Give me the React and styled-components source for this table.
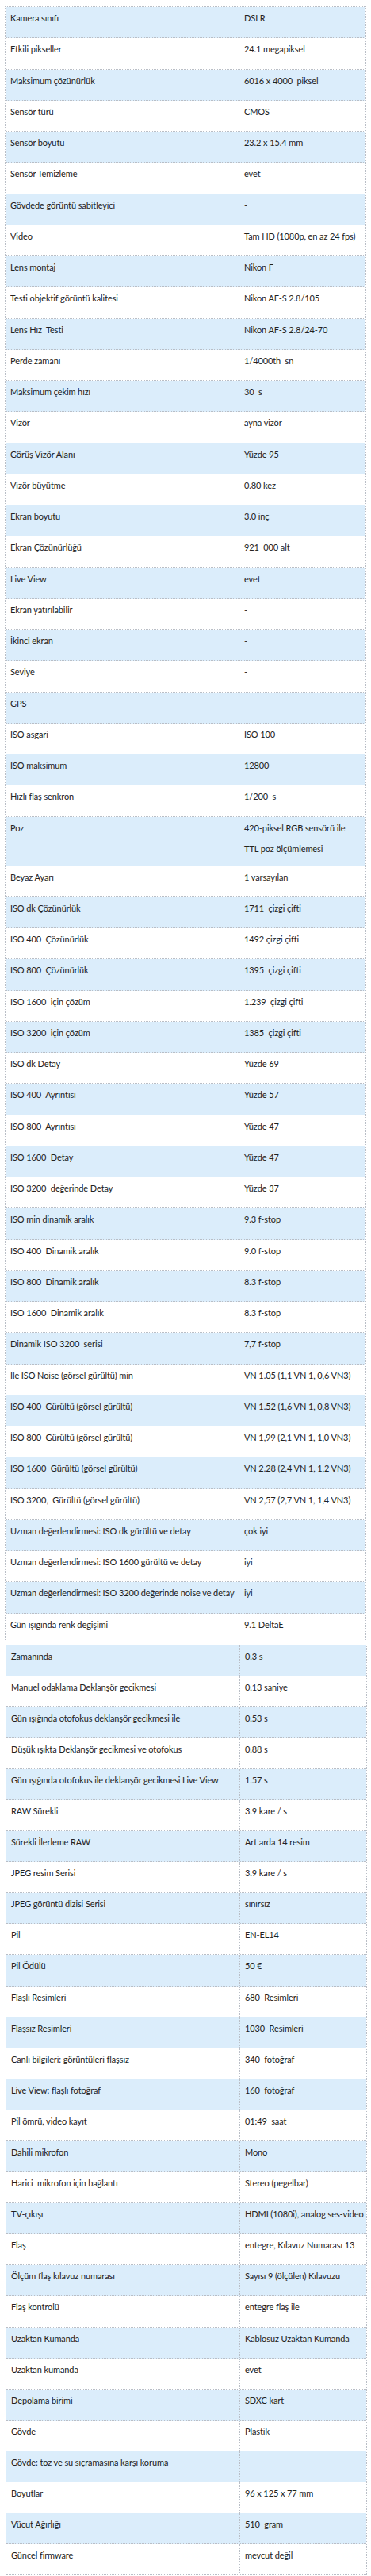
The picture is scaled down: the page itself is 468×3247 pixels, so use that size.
import React from "react";
import styled, { createGlobalStyle } from "styled-components";

const Global = createGlobalStyle`
  html, body { margin: 0; padding: 0; background: #ffffff; }
  body { font-family: Lato, "Noto Sans", "Liberation Sans", sans-serif; color: #222; }
`;

const Page = styled.div`
  padding: 8px 0 0 6px;
  display: flex;
  flex-direction: column;
  gap: 6px;
`;

const Table = styled.div`
  width: 456px;
  margin-left: ${(p) => p.$shift || 0}px;
  border-top: 1px dotted #b9bec6;
  border-left: 1px dotted #b9bec6;
  border-right: 1px dotted #b9bec6;
  box-sizing: border-box;
  display: flex;
  flex-direction: column;
`;

const Row = styled.div`
  display: grid;
  grid-template-columns: 295px 1fr;
  height: ${(p) => p.$h}px;
  box-sizing: border-box;
  background: ${(p) => (p.$blue ? "#dbedfb" : "#ffffff")};
  border-bottom: ${(p) => (p.$noLine ? "none" : "1px dotted #b9bec6")};
`;

const Cell = styled.div`
  padding: 1px 2px 0 6px;
  font-size: 11px;
  line-height: 26px;
  letter-spacing: -0.1px;
  white-space: pre;
  overflow: hidden;
  border-right: ${(p) => (p.$first ? "1px dotted #b9bec6" : "none")};
`;

const table1 = [
  ["Kamera sınıfı", "DSLR"],
  ["Etkili pikseller", "24.1 megapiksel"],
  ["Maksimum çözünürlük", "6016 x 4000  piksel"],
  ["Sensör türü", "CMOS"],
  ["Sensör boyutu", "23.2 x 15.4 mm"],
  ["Sensör Temizleme", "evet"],
  ["Gövdede görüntü sabitleyici", "-"],
  ["Video", "Tam HD (1080p, en az 24 fps)"],
  ["Lens montaj", "Nikon F"],
  ["Testi objektif görüntü kalitesi", "Nikon AF-S 2.8/105"],
  ["Lens Hız  Testi", "Nikon AF-S 2.8/24-70"],
  ["Perde zamanı", "1/4000th  sn"],
  ["Maksimum çekim hızı", "30  s"],
  ["Vizör", "ayna vizör"],
  ["Görüş Vizör Alanı", "Yüzde 95"],
  ["Vizör büyütme", "0.80 kez"],
  ["Ekran boyutu", "3.0 inç"],
  ["Ekran Çözünürlüğü", "921  000 alt"],
  ["Live View", "evet"],
  ["Ekran yatırılabilir", "-"],
  ["İkinci ekran", "-"],
  ["Seviye", "-"],
  ["GPS", "-"],
  ["ISO asgari", "ISO 100"],
  ["ISO maksimum", "12800"],
  ["Hızlı flaş senkron", "1/200  s"],
  ["Poz", "420-piksel RGB sensörü ile\nTTL poz ölçümlemesi", true],
  ["Beyaz Ayarı", "1 varsayılan"],
  ["ISO dk Çözünürlük", "1711  çizgi çifti"],
  ["ISO 400  Çözünürlük", "1492 çizgi çifti"],
  ["ISO 800  Çözünürlük", "1395  çizgi çifti"],
  ["ISO 1600  için çözüm", "1.239  çizgi çifti"],
  ["ISO 3200  için çözüm", "1385  çizgi çifti"],
  ["ISO dk Detay", "Yüzde 69"],
  ["ISO 400  Ayrıntısı", "Yüzde 57"],
  ["ISO 800  Ayrıntısı", "Yüzde 47"],
  ["ISO 1600  Detay", "Yüzde 47"],
  ["ISO 3200  değerinde Detay", "Yüzde 37"],
  ["ISO min dinamik aralık", "9.3 f-stop"],
  ["ISO 400  Dinamik aralık", "9.0 f-stop"],
  ["ISO 800  Dinamik aralık", "8.3 f-stop"],
  ["ISO 1600  Dinamik aralık", "8.3 f-stop"],
  ["Dinamik ISO 3200  serisi", "7,7 f-stop"],
  ["Ile ISO Noise (görsel gürültü) min", "VN 1.05 (1,1 VN 1, 0,6 VN3)"],
  ["ISO 400  Gürültü (görsel gürültü)", "VN 1.52 (1,6 VN 1, 0,8 VN3)"],
  ["ISO 800  Gürültü (görsel gürültü)", "VN 1,99 (2,1 VN 1, 1,0 VN3)"],
  ["ISO 1600  Gürültü (görsel gürültü)", "VN 2.28 (2,4 VN 1, 1,2 VN3)"],
  ["ISO 3200,  Gürültü (görsel gürültü)", "VN 2,57 (2,7 VN 1, 1,4 VN3)"],
  ["Uzman değerlendirmesi: ISO dk gürültü ve detay", "çok iyi"],
  ["Uzman değerlendirmesi: ISO 1600 gürültü ve detay", "iyi"],
  ["Uzman değerlendirmesi: ISO 3200 değerinde noise ve detay", "iyi"],
  ["Gün ışığında renk değişimi", "9.1 DeltaE"],
];

const table2 = [
  ["Zamanında", "0.3 s"],
  ["Manuel odaklama Deklanşör gecikmesi", "0.13 saniye"],
  ["Gün ışığında otofokus deklanşör gecikmesi ile", "0.53 s"],
  ["Düşük ışıkta Deklanşör gecikmesi ve otofokus", "0.88 s"],
  ["Gün ışığında otofokus ile deklanşör gecikmesi Live View", "1.57 s"],
  ["RAW Sürekli", "3.9 kare / s"],
  ["Sürekli İlerleme RAW", "Art arda 14 resim"],
  ["JPEG resim Serisi", "3.9 kare / s"],
  ["JPEG görüntü dizisi Serisi", "sınırsız"],
  ["Pil", "EN-EL14"],
  ["Pil Ödülü", "50 €"],
  ["Flaşlı Resimleri", "680  Resimleri"],
  ["Flaşsız Resimleri", "1030  Resimleri"],
  ["Canlı bilgileri: görüntüleri flaşsız", "340  fotoğraf"],
  ["Live View: flaşlı fotoğraf", "160  fotoğraf"],
  ["Pil ömrü, video kayıt", "01:49  saat"],
  ["Dahili mikrofon", "Mono"],
  ["Harici  mikrofon için bağlantı", "Stereo (pegelbar)"],
  ["TV-çıkışı", "HDMI (1080i), analog ses-video"],
  ["Flaş", "entegre, Kılavuz Numarası 13"],
  ["Ölçüm flaş kılavuz numarası", "Sayısı 9 (ölçülen) Kılavuzu"],
  ["Flaş kontrolü", "entegre flaş ile"],
  ["Uzaktan Kumanda", "Kablosuz Uzaktan Kumanda"],
  ["Uzaktan kumanda", "evet"],
  ["Depolama birimi", "SDXC kart"],
  ["Gövde", "Plastik"],
  ["Gövde: toz ve su sıçramasına karşı koruma", "-"],
  ["Boyutlar", "96 x 125 x 77 mm"],
  ["Vücut Ağırlığı", "510  gram"],
  ["Güncel firmware", "mevcut değil"],
];

function SpecTable({ rows, rowH, tallH, shift, openEnd, lastH }) {
  return (
    <Table $shift={shift}>
      {rows.map(([label, value, tall], i) => {
        const isLast = i === rows.length - 1;
        const h = tall ? tallH : isLast && lastH ? lastH : rowH;
        return (
          <Row key={i} $h={h} $blue={i % 2 === 0} $noLine={isLast && openEnd}>
            <Cell $first>{label}</Cell>
            <Cell>{value}</Cell>
          </Row>
        );
      })}
    </Table>
  );
}

export default function App() {
  return (
    <>
      <Global />
      <Page>
        <SpecTable rows={table1} rowH={39.25} tallH={62} openEnd lastH={33} />
        <SpecTable rows={table2} rowH={39.1} shift={1} />
      </Page>
    </>
  );
}
